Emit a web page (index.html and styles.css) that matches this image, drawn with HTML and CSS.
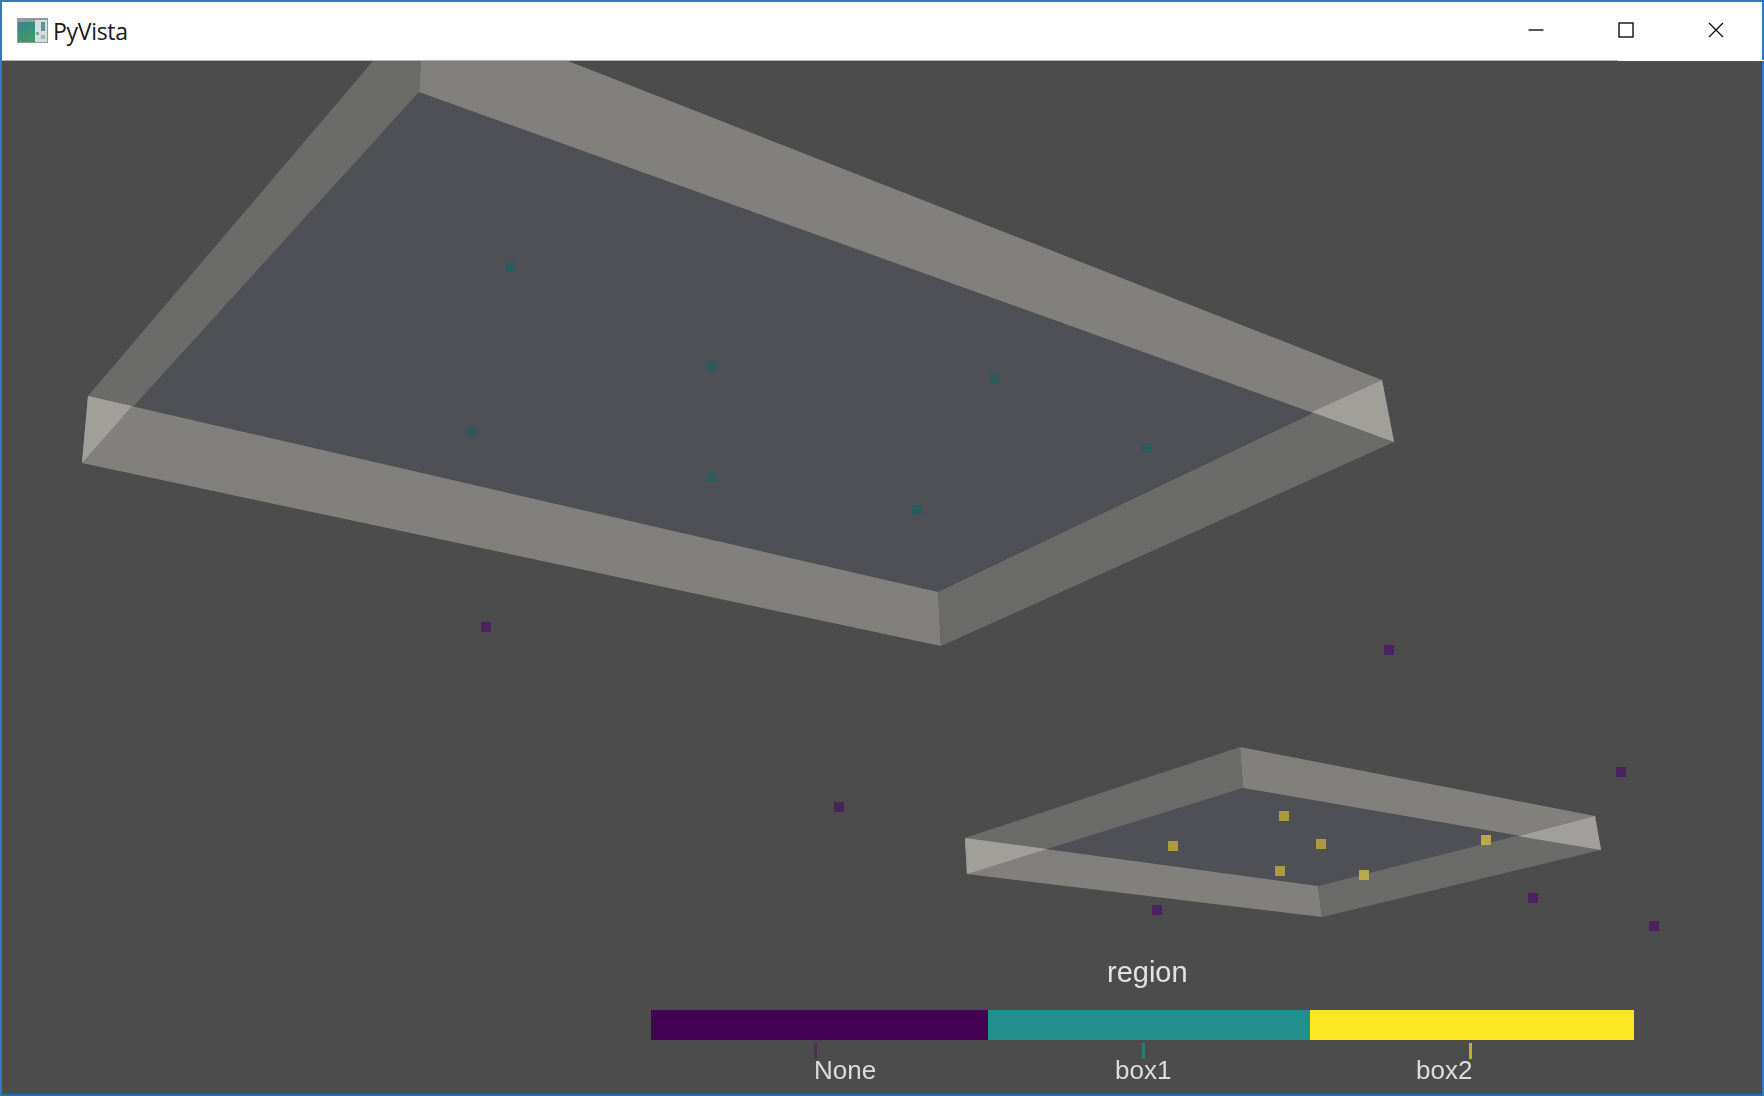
FILE: index.html
```html
<!DOCTYPE html>
<html lang="en">
<head>
<meta charset="utf-8">
<title>PyVista</title>
<link rel="stylesheet" href="styles.css">
</head>
<body>
<div class="window">
  <header class="titlebar">
    <svg class="app-icon" viewBox="0 0 31 25" width="31" height="25" aria-hidden="true">
      <defs>
        <linearGradient id="iconFill" x1="0" y1="0" x2="0.4" y2="1">
          <stop offset="0" stop-color="#3a8496"/>
          <stop offset="1" stop-color="#3f9a62"/>
        </linearGradient>
        <filter id="iconSoft"><feGaussianBlur stdDeviation="0.5"/></filter>
      </defs>
      <g filter="url(#iconSoft)">
        <rect width="31" height="25" fill="#929a9e"/>
        <rect x="1" y="4" width="17" height="20" fill="url(#iconFill)"/>
        <rect x="18" y="2" width="12" height="22" fill="#d5dede"/>
        <rect x="24" y="4" width="4" height="9" fill="#5f9298"/>
        <rect x="19" y="14" width="3" height="3" fill="#7fa59c"/>
        <rect x="24" y="17" width="4" height="4" fill="#a5b5b3"/>
      </g>
    </svg>
    <span class="app-title">PyVista</span>
    <div class="controls">
      <button class="control" aria-label="Minimize">
        <svg viewBox="0 0 16 16" width="16" height="16"><path d="M0.5 8H15.5"/></svg>
      </button>
      <button class="control" aria-label="Maximize">
        <svg viewBox="0 0 16 16" width="16" height="16"><rect x="1" y="1" width="14" height="14"/></svg>
      </button>
      <button class="control" aria-label="Close">
        <svg viewBox="0 0 16 16" width="16" height="16"><path d="M1 1L15 15M15 1L1 15"/></svg>
      </button>
    </div>
  </header>
  <div class="title-rule"></div>
  <main class="viewport">
    <svg class="scene" viewBox="2 61 1760 1033" aria-hidden="true">
      <!-- large box -->
      <polygon class="floor" points="419,92 1312,412 938,592 132,406"/>
      <polygon class="wall-side" points="88,396 373,61 421,61 419,92 82,463"/>
      <polygon class="wall-long" points="421,61 568,61 1382,380 1394,442 419,92"/>
      <polygon class="wall-long" points="88,396 938,592 941,646 82,463"/>
      <polygon class="wall-side" points="938,592 1382,380 1394,442 941,646"/>
      <polygon class="wall-end" points="88,396 132,406 82,463"/>
      <polygon class="wall-end" points="1382,380 1394,442 1312,412"/>
      <!-- small box -->
      <polygon class="floor" points="1243,788 1518,836 1318,886 1047,849"/>
      <polygon class="wall-side" points="965,838 1240,747 1243,788 967,874"/>
      <polygon class="wall-long" points="1240,747 1595,816 1601,850 1243,788"/>
      <polygon class="wall-long" points="965,838 1318,886 1322,917 967,874"/>
      <polygon class="wall-side" points="1318,886 1595,816 1601,850 1322,917"/>
      <polygon class="wall-end" points="965,838 1047,849 967,874"/>
      <polygon class="wall-end" points="1595,816 1601,850 1518,836"/>
      <!-- none points -->
      <g class="pt-none">
        <rect x="481" y="622" width="10" height="10"/>
        <rect x="1384" y="645" width="10" height="10"/>
        <rect x="834" y="802" width="10" height="10"/>
        <rect x="1616" y="767" width="10" height="10"/>
        <rect x="1152" y="905" width="10" height="10"/>
        <rect x="1528" y="893" width="10" height="10"/>
        <rect x="1649" y="921" width="10" height="10"/>
      </g>
      <!-- box1 points -->
      <g class="pt-box1">
        <rect x="505" y="262" width="10" height="10"/>
        <rect x="707" y="361" width="10" height="10"/>
        <rect x="990" y="374" width="10" height="10"/>
        <rect x="467" y="427" width="10" height="10"/>
        <rect x="707" y="472" width="10" height="10"/>
        <rect x="912" y="505" width="10" height="10"/>
        <rect x="1142" y="443" width="10" height="10"/>
      </g>
      <!-- box2 points -->
      <g class="pt-box2">
        <rect x="1279" y="811" width="10" height="10"/>
        <rect x="1168" y="841" width="10" height="10"/>
        <rect x="1316" y="839" width="10" height="10"/>
        <rect x="1275" y="866" width="10" height="10"/>
      </g>
      <g class="pt-box2-lit">
        <rect x="1359" y="870" width="10" height="10"/>
        <rect x="1481" y="835" width="10" height="10"/>
      </g>
    </svg>
    <div class="legend">
      <div class="legend-title">region</div>
      <div class="legend-bar">
        <div class="seg seg-none"></div>
        <div class="seg seg-box1"></div>
        <div class="seg seg-box2"></div>
      </div>
      <div class="tick tick-none"></div>
      <div class="tick tick-box1"></div>
      <div class="tick tick-box2"></div>
      <div class="legend-label label-none">None</div>
      <div class="legend-label label-box1">box1</div>
      <div class="legend-label label-box2">box2</div>
    </div>
  </main>
</div>
</body>
</html>
```
FILE: styles.css
```css
* { box-sizing: border-box; }
html, body { margin: 0; height: 100%; }
body { background: #4c4c4c; overflow: hidden; }

.window {
  display: flex;
  flex-direction: column;
  width: 1764px;
  height: 1096px;
  border: 2px solid #2b7cc4;
  border-bottom-color: #2a6cab;
  background: #4c4c4c;
}

.titlebar {
  display: flex;
  align-items: center;
  flex: none;
  height: 58px;
  padding-left: 15px;
  background: #fff;
}
.app-icon { flex: none; margin-top: -1px; }
.app-title {
  margin-left: 5px;
  margin-top: -1px;
  font: 23px "Open Sans", "Liberation Sans", sans-serif;
  letter-spacing: -0.3px;
  color: #1a1a1a;
}
.controls { display: flex; margin-left: auto; margin-top: -2px; padding-right: 1px; }
.control {
  display: flex;
  align-items: center;
  justify-content: center;
  width: 90px;
  height: 40px;
  padding: 0;
  border: 0;
  background: none;
}
.control svg { fill: none; stroke: #111; stroke-width: 1.4; }

.title-rule {
  flex: none;
  width: 1616px;
  height: 1px;
  background: #b4b4b4;
  box-shadow: 1616px 0 0 0 #fff;
}

.viewport {
  position: relative;
  flex: 1;
  min-height: 0;
  overflow: hidden;
}

.scene {
  position: absolute;
  inset: 0;
  width: 1760px;
  height: 1033px;
  filter: blur(0.5px);
}

.floor { fill: #4e5056; }
.wall-side { fill: #6b6b6a; }
.wall-long { fill: #81807d; }
.wall-end { fill: #a09f99; }
.pt-none { fill: #4c215f; }
.pt-box1 { fill: #2f5a5c; }
.pt-box2 { fill: #ab9a3e; }
.pt-box2-lit { fill: #b9a84c; }

/* scalar bar: sits on top of the render; offsets are relative to the viewport */
.legend {
  position: absolute;
  left: 649px;
  top: 910px;
  width: 983px;
  height: 120px;
  color: #dcdcdc;
  font-family: "Liberation Sans", Arial, sans-serif;
  filter: blur(0.4px);
}
.legend-title {
  position: absolute;
  left: 456px;
  top: -15px;
  font-size: 29px;
  line-height: 32px;
  color: #e2e2e2;
}
.legend-bar {
  position: absolute;
  left: 0;
  top: 39px;
  display: flex;
  width: 983px;
  height: 30px;
}
.seg-none { width: 337px; background: #440154; }
.seg-box1 { width: 322px; background: #21908c; }
.seg-box2 { width: 324px; background: #fde725; }

.tick { position: absolute; top: 72px; width: 3px; height: 16px; }
.tick-none { left: 163px; background: #4f3058; }
.tick-box1 { left: 491px; background: #2e7a76; }
.tick-box2 { left: 818px; background: #c4ae31; }

.legend-label { position: absolute; top: 83px; font-size: 26px; line-height: 32px; }
.label-none { left: 163px; }
.label-box1 { left: 464px; }
.label-box2 { left: 765px; }
```
